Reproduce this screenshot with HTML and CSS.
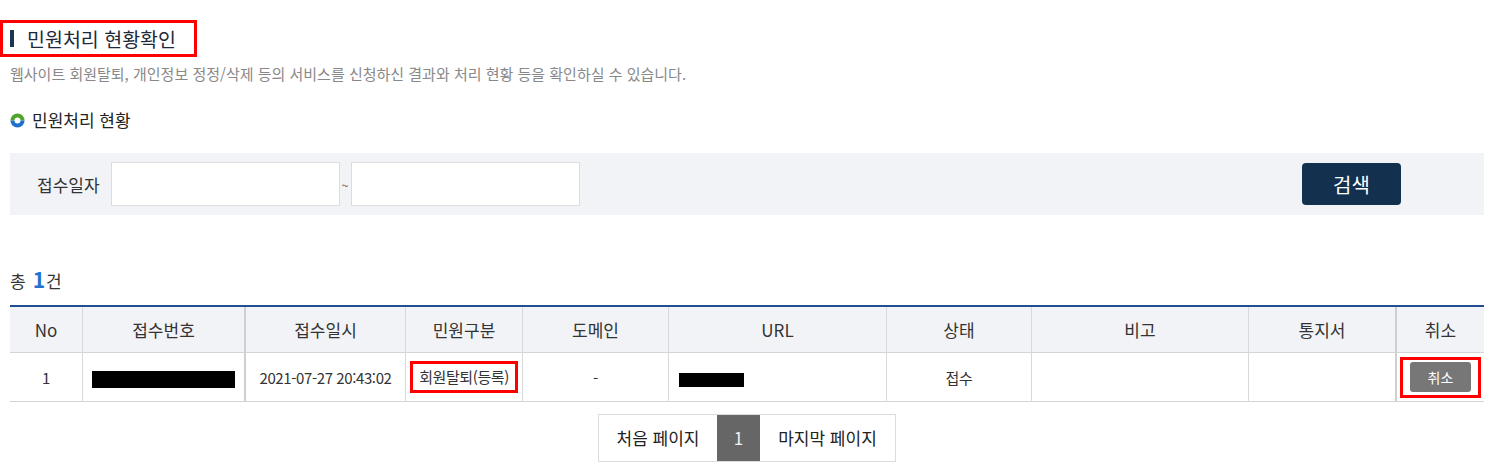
FILE: index.html
```html
<!DOCTYPE html>
<html lang="ko">
<head>
<meta charset="utf-8">
<title>민원처리 현황확인</title>
<link rel="stylesheet" href="styles.css">
</head>
<body>
<div class="page">
  <h2 class="page-title"><span class="title-bar"></span>민원처리 현황확인</h2>
  <p class="desc">웹사이트 회원탈퇴, 개인정보 정정/삭제 등의 서비스를 신청하신 결과와 처리 현황 등을 확인하실 수 있습니다.</p>
  <h3 class="sec-title"><svg class="sec-icon" viewBox="0 0 16 16" width="15" height="15"><path d="M0.5 8a7.5 7.5 0 0 1 15 0z" fill="#4fa42e"/><path d="M0.5 8a7.5 7.5 0 0 0 15 0z" fill="#1f6fcf"/><circle cx="8" cy="8" r="3.2" fill="#fff"/></svg>민원처리 현황</h3>
  <div class="search">
    <span class="search-label">접수일자</span>
    <input class="date-input" type="text">
    <span class="tilde">~</span>
    <input class="date-input" type="text">
    <button class="btn-search" type="button">검색</button>
  </div>
  <p class="total">총<strong class="total-num">1</strong>건</p>
  <table class="list">
    <colgroup>
      <col class="c-no"><col class="c-rno"><col class="c-date"><col class="c-type"><col class="c-dom"><col class="c-url"><col class="c-stat"><col class="c-note"><col class="c-doc"><col class="c-cancel">
    </colgroup>
    <thead>
      <tr>
        <th>No</th><th>접수번호</th><th class="thick">접수일시</th><th>민원구분</th><th>도메인</th><th>URL</th><th>상태</th><th>비고</th><th>통지서</th><th class="thick">취소</th>
      </tr>
    </thead>
    <tbody>
      <tr>
        <td>1</td>
        <td><span class="redact redact-no"></span></td>
        <td class="thick">2021-07-27 20:43:02</td>
        <td><span class="mark-box">회원탈퇴(등록)</span></td>
        <td>-</td>
        <td class="left"><span class="redact redact-url"></span></td>
        <td>접수</td>
        <td></td>
        <td></td>
        <td class="thick"><span class="mark-btn"><button class="btn-cancel" type="button">취소</button></span></td>
      </tr>
    </tbody>
  </table>
  <div class="paging">
    <div class="paging-inner">
      <span class="pg pg-first">처음 페이지</span>
      <span class="pg pg-cur">1</span>
      <span class="pg pg-last">마지막 페이지</span>
    </div>
  </div>
</div>
</body>
</html>
```
FILE: styles.css
```css
* { box-sizing: border-box; }
html, body { margin: 0; padding: 0; background: #fff; }
body {
  font-family: "Noto Sans CJK KR", "Noto Sans", sans-serif;
  color: #333;
}
.page { padding: 0 6px 0 10px; }

.page-title {
  display: inline-flex;
  align-items: center;
  gap: 13px;
  height: 37px;
  margin: 20px 0 0 -10px;
  padding: 0 18px 0 7px;
  border: 3px solid #ff0000;
  font-size: 19.5px;
  font-weight: 400;
  color: #1e2a3a;
  line-height: 31px;
}
.title-bar { width: 4px; height: 17px; background: #1c3551; }

.desc {
  margin: 7px 0 0;
  font-size: 15px;
  line-height: 20px;
  color: #888;
}

.sec-title {
  display: flex;
  align-items: center;
  gap: 7px;
  margin: 24px 0 0;
  font-size: 17px;
  font-weight: 400;
  line-height: 24px;
  color: #222;
}
.sec-icon { display: block; }

.search {
  display: flex;
  align-items: center;
  height: 62px;
  margin-top: 21px;
  padding: 0 83px 0 27px;
  background: #f2f3f7;
}
.search-label { font-size: 17px; color: #333; margin-right: 11px; }
.date-input {
  width: 229px;
  height: 44px;
  border: 1px solid #dcdcdc;
  background: #fff;
  margin: 0;
  padding: 0 8px;
  font: inherit;
}
.tilde { width: 11px; text-align: center; font-size: 12px; color: #555; }
.btn-search {
  margin-left: auto;
  width: 99px;
  height: 42px;
  border: none;
  border-radius: 4px;
  background: #13314f;
  color: #fff;
  font-family: inherit;
  font-size: 20px;
  padding: 0;
}

.total {
  margin: 49px 0 0;
  height: 30px;
  line-height: 30px;
  font-size: 17px;
  color: #333;
}
.total-num {
  font-size: 21px;
  font-weight: 700;
  color: #1f72cf;
  margin: 0 1px 0 7px;
}

.list {
  width: 100%;
  margin-top: 11px;
  border-collapse: separate;
  border-spacing: 0;
  table-layout: fixed;
  border-top: 2px solid #1f4f8f;
}
.c-no { width: 72px; }
.c-rno { width: 162px; }
.c-date { width: 161px; }
.c-type { width: 117px; }
.c-dom { width: 146px; }
.c-url { width: 218px; }
.c-stat { width: 145px; }
.c-note { width: 217px; }
.c-doc { width: 147px; }
.c-cancel { width: 89px; }

.list th, .list td {
  padding: 0;
  text-align: center;
  vertical-align: middle;
  border-bottom: 1px solid #d4d4d4;
  border-left: 1px solid #d9d9d9;
}
.list th:first-child, .list td:first-child { border-left: none; }
.list th.thick, .list td.thick { border-left: 2px solid #cfcfcf; }
.list th {
  height: 46px;
  background: #f2f3f7;
  font-size: 17px;
  font-weight: 400;
  color: #333;
}
.list td {
  height: 49px;
  font-size: 15px;
  letter-spacing: -0.4px;
  color: #333;
}
.list td.left { text-align: left; padding-left: 10px; }

.redact { display: inline-block; background: #000; vertical-align: middle; }
.redact-no { width: 143px; height: 17px; }
.redact-url { width: 65px; height: 14px; margin-top: 2px; }

.mark-box {
  display: inline-block;
  border: 3px solid #ff0000;
  padding: 3px 6px;
  line-height: 20px;
}
.mark-btn {
  display: inline-block;
  border: 3px solid #ff0000;
  padding: 2px 7px 3px;
  line-height: 0;
}
.btn-cancel {
  width: 61px;
  height: 30px;
  border: none;
  border-radius: 3px;
  background: #777;
  color: #fff;
  font-family: inherit;
  font-size: 14px;
  padding: 0;
}

.paging {
  display: flex;
  justify-content: center;
  margin-top: 12px;
}
.paging-inner {
  display: flex;
  border: 1px solid #dcdcdc;
}
.pg {
  height: 46px;
  line-height: 46px;
  font-size: 17px;
  color: #222;
  text-align: center;
}
.pg-first { width: 118px; }
.pg-cur { width: 43px; background: #666; color: #f2f2f2; }
.pg-last { width: 135px; }
```
